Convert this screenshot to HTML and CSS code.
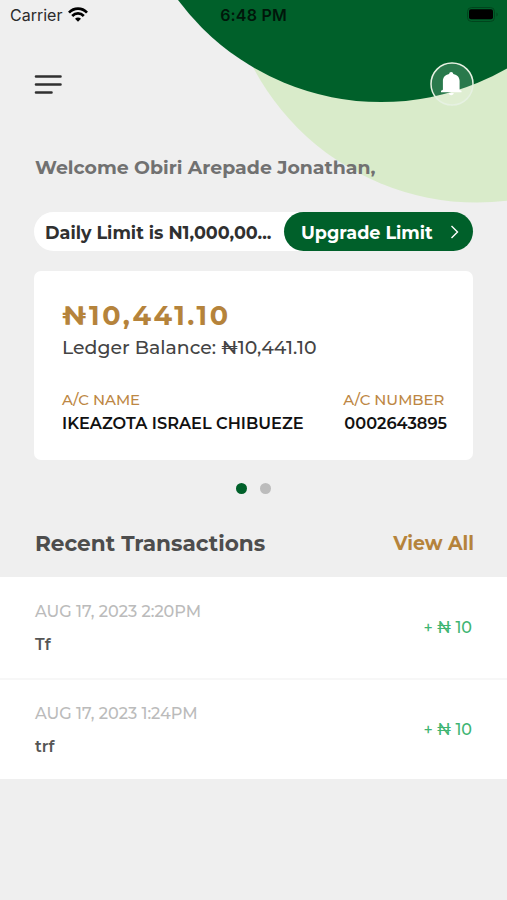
FILE: index.html
```html
<!DOCTYPE html>
<html lang="en">
<head>
<meta charset="utf-8">
<meta name="viewport" content="width=device-width, initial-scale=1">
<title>Account overview</title>
<link rel="stylesheet" href="styles.css">
</head>
<body>
<main class="screen">
  <svg class="backdrop" viewBox="0 0 507 210" aria-hidden="true">
    <circle cx="477" cy="-50.5" r="253" fill="#d9ebca"/>
    <circle cx="381" cy="-151" r="253" fill="#00602a"/>
  </svg>

  <div class="status">
    <div class="carrier"><span class="carrier-name">Carrier</span>
      <svg class="wifi" viewBox="0 0 20 15"><g fill="none" stroke="#000" stroke-width="2.7"><path d="M1 5.6C6 .3 14 .3 19 5.6"/><path d="M4.2 9C7.5 5.6 12.500 5.6 15.800 9"/></g><path d="M10 14.700 7 11.700C8.600 10.200 11.400 10.200 13 11.700Z"/></svg>
    </div>
    <time class="clock">6:48 PM</time>
    <svg class="battery" viewBox="0 0 32 15"><rect x=".5" y=".5" width="27" height="14" rx="4" fill="none" stroke="#00451d"/><rect x="2" y="2.300" width="24" height="10" rx="2"/><path d="M29.500 5.500v4c1.500-.6 1.500-3.400 0-4" fill="#00451d"/></svg>
  </div>

  <header class="toolbar">
    <svg class="menu" viewBox="0 0 28 22"><path d="M2 2.500h24.500M2 10.500h24.500M2 18.500h15.500" fill="none" stroke="#303030" stroke-width="2.600" stroke-linecap="round"/></svg>
    <svg class="bell" viewBox="0 0 44 44"><circle cx="22" cy="22" r="21" fill="#fff" fill-opacity=".16" stroke="#e6f1e2" stroke-width="1.500"/><path fill="#fff" d="M21.200 10c1.200 0 1.900.8 2.100 1.900 4.300.9 6.300 3.600 6.300 7.100v8.500c.3.700.9 1 1.900 1.200v1.500H11v-1.500c1-.2 1.600-.5 1.900-1.200V19c0-3.500 2-6.200 6.200-7.100.2-1.100.9-1.900 2.100-1.900M18.700 31h5c0 1.300-1 2.200-2.500 2.200s-2.500-.9-2.500-2.200"/></svg>
  </header>

  <h1 class="welcome">Welcome Obiri Arepade Jonathan,</h1>

  <div class="limit">
    <span class="limit-text">Daily Limit is N1,000,00...</span>
    <button class="upgrade"><span class="upgrade-text">Upgrade Limit</span><svg class="chevron" viewBox="0 0 9 14"><path d="m1.500 1 6 6-6 6" fill="none" stroke="#fff" stroke-width="1.400"/></svg></button>
  </div>

  <section class="card">
    <div class="balance">₦10,441.10</div>
    <div class="ledger">Ledger Balance: ₦10,441.10</div>
    <div class="account">
      <div class="field"><div class="label">A/C NAME</div><div class="value">IKEAZOTA ISRAEL CHIBUEZE</div></div>
      <div class="field"><div class="label number-label">A/C NUMBER</div><div class="value">0002643895</div></div>
    </div>
  </section>

  <div class="dots"><i class="dot active"></i><i class="dot"></i></div>

  <div class="section-head"><h2 class="heading">Recent Transactions</h2><a class="view-all">View All</a></div>

  <ul class="list">
    <li class="row"><div><div class="date">AUG 17, 2023 2:20PM</div><div class="note">Tf</div></div><div class="amount">+ ₦ 10</div></li>
    <li class="row"><div><div class="date">AUG 17, 2023 1:24PM</div><div class="note">trf</div></div><div class="amount">+ ₦ 10</div></li>
  </ul>
</main>
</body>
</html>
```
FILE: styles.css
```css
* { box-sizing: border-box; margin: 0; padding: 0; }
body { background: #efefef; font-family: Montserrat, Inter, "Open Sans", sans-serif; white-space: nowrap; }
svg { display: block; }
.screen { position: relative; isolation: isolate; width: 507px; height: 900px; overflow: hidden; }
.backdrop { position: absolute; z-index: -1; top: 0; left: 0; width: 507px; height: 210px; }
.status { display: grid; grid-template-columns: 1fr auto 1fr; align-items: center; height: 30px; padding: 0 8px 0 10px; font: 400 16px/20px Inter, sans-serif; color: #000; }
.carrier { display: flex; align-items: center; gap: 6px; color: #2b2b2b; }
.wifi { width: 20px; height: 15px; margin-top: -2px; }
.clock { margin-left: -2px; font-weight: 600; letter-spacing: .2px; color: #00170a; }
.battery { width: 32px; height: 15px; margin-top: -2px; justify-self: end; }
.toolbar { display: flex; align-items: center; justify-content: space-between; height: 44px; margin: 32px 33px 0 34px; }
.menu { width: 28px; height: 22px; margin-top: 2px; }
.bell { width: 44px; height: 44px; }
.welcome { margin: 50px 0 0 35px; font-size: 18.900px; line-height: 24px; font-weight: 700; color: #717171; }
.limit { display: flex; justify-content: space-between; margin: 32px 34px 0; height: 39px; border-radius: 20px; background: #fff; }
.limit-text { padding-left: 11px; font-size: 17.600px; line-height: 41px; font-weight: 700; color: #303030; }
.upgrade { display: flex; align-items: center; justify-content: space-between; width: 189px; padding: 1px 14px 0 17px; border: 0; border-radius: 20px; background: #00602a; color: #fff; font: inherit; font-size: 17.600px; font-weight: 700; }
.chevron { width: 9px; height: 14px; }
.card { height: 189px; margin: 20px 34px 0; padding: 28px 26px 0 28px; border-radius: 7px; background: #fff; }
.balance { font-size: 27px; line-height: 33px; font-weight: 700; letter-spacing: 2.600px; color: #b5833b; }
.ledger { margin-top: 4px; font-size: 18.850px; line-height: 24px; font-weight: 500; color: #444; }
.account { display: flex; justify-content: space-between; margin-top: 30px; }
.label { font-size: 14.900px; line-height: 20px; font-weight: 500; color: #bd8744; }
.number-label { margin-left: -1px; }
.value { margin-top: 2px; font-size: 16.200px; line-height: 22px; font-weight: 600; color: #111; }
.dots { display: flex; justify-content: center; gap: 13px; margin-top: 23px; }
.dot { width: 11px; height: 11px; border-radius: 50%; background: #bcbcbc; }
.active { background: #00602a; }
.section-head { display: flex; align-items: center; justify-content: space-between; height: 30px; margin: 34px 33px 0 35px; }
.heading { font-size: 21.600px; line-height: 30px; font-weight: 700; color: #4d4d4d; }
.view-all { margin-top: 2px; font-size: 19px; line-height: 30px; font-weight: 700; color: #b5833b; }
.list { margin-top: 19px; list-style: none; }
.row { display: flex; align-items: center; justify-content: space-between; height: 101px; padding: 0 35px; background: #fff; }
.row + .row { border-top: 2px solid #f7f7f7; }
.date { font-size: 16.100px; line-height: 22px; font-weight: 500; color: #bbb; }
.note { margin-top: 12px; font-size: 16px; line-height: 22px; font-weight: 600; color: #555; }
.amount { font-size: 16px; line-height: 22px; font-weight: 500; color: #3fb573; }
```
